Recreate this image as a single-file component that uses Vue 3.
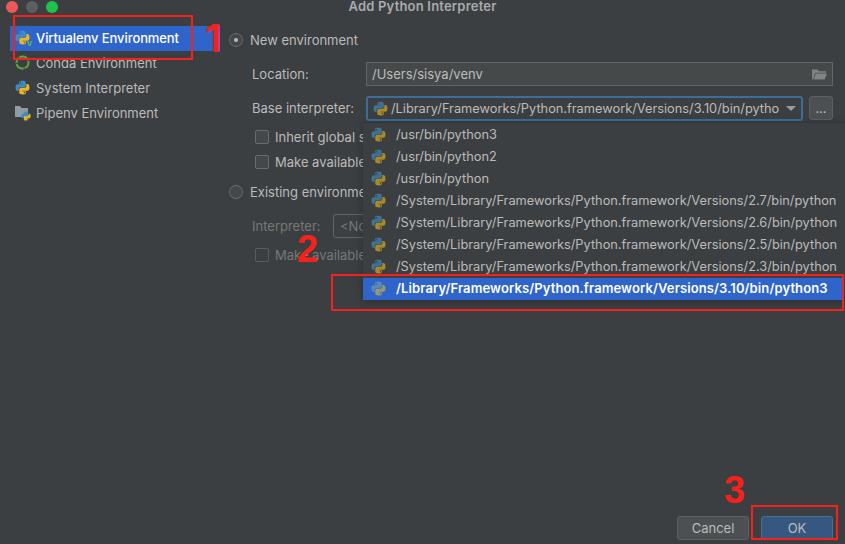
<template>
  <div class="dialog">
    <svg class="defs" width="0" height="0">
      <symbol id="py" viewBox="0 0 24 24">
        <path fill="var(--py-blue)" d="M11.9 1C6.3 1 6.6 3.4 6.6 3.4v2.5h5.4v.8H4.4S.8 6.3.8 12s3.1 5.5 3.1 5.5h1.9v-2.7s-.1-3.1 3.1-3.1h5.3s3 0 3-2.9V3.9S17.7 1 11.9 1zM8.9 2.7a1 1 0 110 2 1 1 0 010-2z" />
        <path fill="var(--py-yellow)" transform="rotate(180 12 12)" d="M11.9 1C6.3 1 6.6 3.4 6.6 3.4v2.5h5.4v.8H4.4S.8 6.3.8 12s3.1 5.5 3.1 5.5h1.9v-2.7s-.1-3.1 3.1-3.1h5.3s3 0 3-2.9V3.9S17.7 1 11.9 1zM8.9 2.7a1 1 0 110 2 1 1 0 010-2z" />
      </symbol>
    </svg>

    <div class="titlebar">
      <div class="lights">
        <span class="light red"></span>
        <span class="light gray"></span>
        <span class="light green"></span>
      </div>
      <span class="title">Add Python Interpreter</span>
    </div>

    <div class="body">
      <ul class="sidebar">
        <li class="side-item active">
          <span class="side-icon">
            <svg class="icon"><use href="#py" /></svg>
            <span class="venv-v">v</span>
          </span>
          Virtualenv Environment
        </li>
        <li class="side-item">
          <span class="side-icon">
            <svg class="icon" viewBox="0 0 15 15">
              <circle cx="7.5" cy="7.5" r="6" fill="none" stroke="#5aa63c" stroke-width="2" stroke-dasharray="7 0.8 9 0.8 6 0.8 10 0.8" />
            </svg>
          </span>
          Conda Environment
        </li>
        <li class="side-item">
          <span class="side-icon"><svg class="icon"><use href="#py" /></svg></span>
          System Interpreter
        </li>
        <li class="side-item">
          <span class="side-icon">
            <svg class="icon" viewBox="0 0 15 15">
              <path fill="#8f9ba5" d="M0 1h5l1.5 2H13v9H0z" />
            </svg>
            <svg class="icon-small"><use href="#py" /></svg>
          </span>
          Pipenv Environment
        </li>
      </ul>

      <div class="form">
        <label class="radio-row">
          <span class="radio checked"></span>
          New environment
        </label>

        <div class="field location-row">
          <span class="label">Location:</span>
          <div class="input">
            <span>/Users/sisya/venv</span>
            <svg class="folder" viewBox="0 0 16 14">
              <path fill="#7f8487" d="M0 1.5h6l1.5 2H15V5H3.5L1 12H0z" />
              <path fill="#7f8487" d="M4 6h12l-2.4 6.5H1.6z" />
            </svg>
          </div>
        </div>

        <div class="field base-row">
          <span class="label">Base interpreter:</span>
          <div class="combo">
            <svg class="icon"><use href="#py" /></svg>
            <span class="combo-text">{{ basePath }}</span>
            <span class="arrow"></span>
          </div>
          <button class="more">...</button>
        </div>

        <label class="check-row inherit-row"><span class="check"></span>Inherit global site-packages</label>
        <label class="check-row make-row"><span class="check"></span>Make available to all projects</label>

        <label class="radio-row existing-row">
          <span class="radio"></span>
          Existing environment
        </label>

        <div class="field interpreter-row muted">
          <span class="label short">Interpreter:</span>
          <div class="select">&lt;No interpreter&gt;</div>
        </div>

        <label class="check-row make-row-2 muted"><span class="check"></span>Make available to all projects</label>

        <ul class="popup">
          <li
            v-for="path in interpreters"
            :key="path"
            class="popup-item"
            :class="{ selected: path === selectedPath }"
          >
            <svg class="icon"><use href="#py" /></svg>
            <span>{{ path }}</span>
          </li>
        </ul>
      </div>
    </div>

    <div class="footer">
      <button class="btn">Cancel</button>
      <button class="btn primary">OK</button>
    </div>

    <!-- red marks drawn over the screenshot -->
    <div class="mark box-1"></div>
    <div class="mark box-2"></div>
    <div class="mark box-3"></div>
    <span class="num num-1">1</span>
    <span class="num num-2">2</span>
    <span class="num num-3">3</span>
  </div>
</template>

<script setup>
const basePath = '/Library/Frameworks/Python.framework/Versions/3.10/bin/pytho'
const selectedPath = '/Library/Frameworks/Python.framework/Versions/3.10/bin/python3'

const interpreters = [
  '/usr/bin/python3',
  '/usr/bin/python2',
  '/usr/bin/python',
  '/System/Library/Frameworks/Python.framework/Versions/2.7/bin/python',
  '/System/Library/Frameworks/Python.framework/Versions/2.6/bin/python',
  '/System/Library/Frameworks/Python.framework/Versions/2.5/bin/python',
  '/System/Library/Frameworks/Python.framework/Versions/2.3/bin/python',
  selectedPath,
]
</script>

<style>
html,
body {
  margin: 0;
  background: #3c3f41;
}
</style>

<style scoped>
.dialog {
  --py-blue: #3d8cc4;
  --py-yellow: #e8b526;
  position: relative;
  display: flex;
  flex-direction: column;
  width: 845px;
  height: 544px;
  overflow: hidden;
  background: #3c3f41;
  color: #bbbbbb;
  font-family: Inter, "Liberation Sans", sans-serif;
  font-size: 13px;
}

.defs {
  position: absolute;
}

.titlebar {
  display: grid;
  grid-template-columns: 1fr auto 1fr;
  align-items: center;
  height: 14px;
}

.lights {
  display: flex;
  gap: 8px;
  padding-left: 6px;
}

.light {
  width: 12px;
  height: 12px;
  border-radius: 50%;
}

.red { background: #f0575a; }
.gray { background: #5c5e60; }
.green { background: #1fc24a; }

.title {
  align-self: start;
  font-size: 13px;
  line-height: 12px;
  font-weight: 600;
  letter-spacing: 0.2px;
  color: #a9abad;
}

.body {
  display: flex;
  flex: 1;
  min-height: 0;
}

.sidebar {
  flex: 0 0 210px;
  margin: 12px 0 0 10px;
  padding: 0;
  list-style: none;
}

.side-item {
  box-sizing: border-box;
  display: flex;
  align-items: center;
  height: 25px;
  padding: 0 0 2px 5px;
}

.side-item.active {
  background: #2f65ca;
  color: #ffffff;
  font-weight: 500;
  letter-spacing: -0.09px;
}

.side-icon {
  position: relative;
  width: 15px;
  height: 15px;
  margin-right: 6px;
}

.icon {
  display: block;
  flex: none;
  width: 15px;
  height: 15px;
}

.icon-small {
  position: absolute;
  right: -1px;
  bottom: -1px;
  width: 10px;
  height: 10px;
}

.venv-v {
  position: absolute;
  right: -2px;
  bottom: -2px;
  font-size: 9px;
  line-height: 9px;
  font-weight: 700;
  color: #62b543;
}

.form {
  position: relative;
  flex: 1;
  min-width: 0;
  padding: 14px 12px 0 9px;
}

.radio-row {
  display: flex;
  align-items: center;
  gap: 7px;
  height: 24px;
}

.radio {
  box-sizing: border-box;
  display: flex;
  align-items: center;
  justify-content: center;
  width: 14px;
  height: 14px;
  border: 1px solid #6b6b6b;
  border-radius: 50%;
  background: #43494a;
}

.radio.checked::after {
  content: "";
  width: 4px;
  height: 4px;
  border-radius: 50%;
  background: #bbbbbb;
}

.field {
  display: flex;
  align-items: center;
  height: 24px;
  padding-left: 23px;
}

.label {
  flex: 0 0 114px;
}

.label.short {
  flex-basis: 81px;
}

.location-row { margin-top: 10px; }
.base-row { margin-top: 10px; }
.inherit-row { margin-top: 5px; }
.make-row { margin-top: 1px; }
.existing-row { margin-top: 6px; }
.interpreter-row { margin-top: 10px; }
.make-row-2 { margin-top: 5px; }

.input {
  box-sizing: border-box;
  flex: 1;
  display: flex;
  align-items: center;
  justify-content: space-between;
  height: 24px;
  padding: 0 5px;
  border: 1px solid #646464;
  background: #45494a;
}

.folder {
  width: 15px;
  height: 13px;
}

.combo {
  --py-blue: #3f7396;
  --py-yellow: #a88a2a;
  box-sizing: border-box;
  flex: 1;
  display: flex;
  align-items: center;
  height: 25px;
  padding: 0 5px;
  border: 2px solid #3d6d99;
  border-radius: 3px;
  background: #3c3f41;
  font-size: 12.8px;
  white-space: nowrap;
  overflow: hidden;
}

.combo-text {
  flex: 1;
  margin-left: 3px;
  overflow: hidden;
}

.arrow {
  flex: none;
  width: 0;
  height: 0;
  margin: 0 0 0 6px;
  border-left: 5px solid transparent;
  border-right: 5px solid transparent;
  border-top: 5px solid #9a9d9f;
}

.more {
  flex: 0 0 24px;
  height: 24px;
  margin-left: 6px;
  padding: 0;
  border: 1px solid #5e6060;
  border-radius: 3px;
  background: #4c5052;
  color: #bbbbbb;
  font: inherit;
}

.check-row {
  display: flex;
  align-items: center;
  gap: 6px;
  height: 24px;
  padding-left: 26px;
}

.check {
  box-sizing: border-box;
  width: 14px;
  height: 14px;
  border: 1px solid #6b6b6b;
  border-radius: 2px;
  background: #43494a;
}

.muted {
  color: #777777;
}

.muted .check {
  background: transparent;
  border-color: #5a5d5f;
}

.select {
  box-sizing: border-box;
  flex: 1;
  height: 24px;
  line-height: 22px;
  padding: 0 6px;
  border: 1px solid #646464;
  border-radius: 3px;
}

.popup {
  --py-blue: #3f7396;
  --py-yellow: #a88a2a;
  position: absolute;
  top: 108px;
  left: 143px;
  width: 482px;
  margin: 0;
  padding: 1px 0 0;
  border-top: 1px solid #333537;
  list-style: none;
  background: #3c3f41;
  box-shadow: 0 2px 8px rgba(0, 0, 0, 0.25);
  font-size: 12.8px;
}

.popup-item {
  box-sizing: border-box;
  display: flex;
  align-items: center;
  height: 22px;
  padding: 0 0 2px 8px;
  white-space: nowrap;
}

.popup-item span {
  margin-left: 10px;
}

.popup-item.selected {
  --py-blue: #5f8ab0;
  --py-yellow: #9a9a70;
  margin-right: 2px;
  background: #2f65ca;
  color: #ffffff;
  font-size: 13px;
  font-weight: 600;
  letter-spacing: 0.11px;
}

.footer {
  display: flex;
  justify-content: flex-end;
  gap: 12px;
  padding: 0 12px 4px 0;
}

.btn {
  box-sizing: border-box;
  width: 72px;
  height: 24px;
  padding: 0;
  border: 1px solid #5e6060;
  border-radius: 3px;
  background: #4c5052;
  color: #bbbbbb;
  font: inherit;
}

.btn.primary {
  border-color: #4c708c;
  background: #365880;
}

.mark {
  position: absolute;
  box-sizing: border-box;
  border: 2px solid #f5221b;
}

.box-1 { left: 13px; top: 15px; width: 180px; height: 45px; }
.box-2 { left: 331px; top: 274px; width: 513px; height: 37px; }
.box-3 { left: 751px; top: 505px; width: 87px; height: 35px; }

.num {
  position: absolute;
  font-family: "Liberation Sans", sans-serif;
  font-size: 38px;
  font-weight: 700;
  line-height: 38px;
  color: #f5221b;
}

.num-1 { left: 205px; top: 19px; font-family: Inter, sans-serif; }
.num-2 { left: 297px; top: 230px; }
.num-3 { left: 724px; top: 471px; }
</style>
